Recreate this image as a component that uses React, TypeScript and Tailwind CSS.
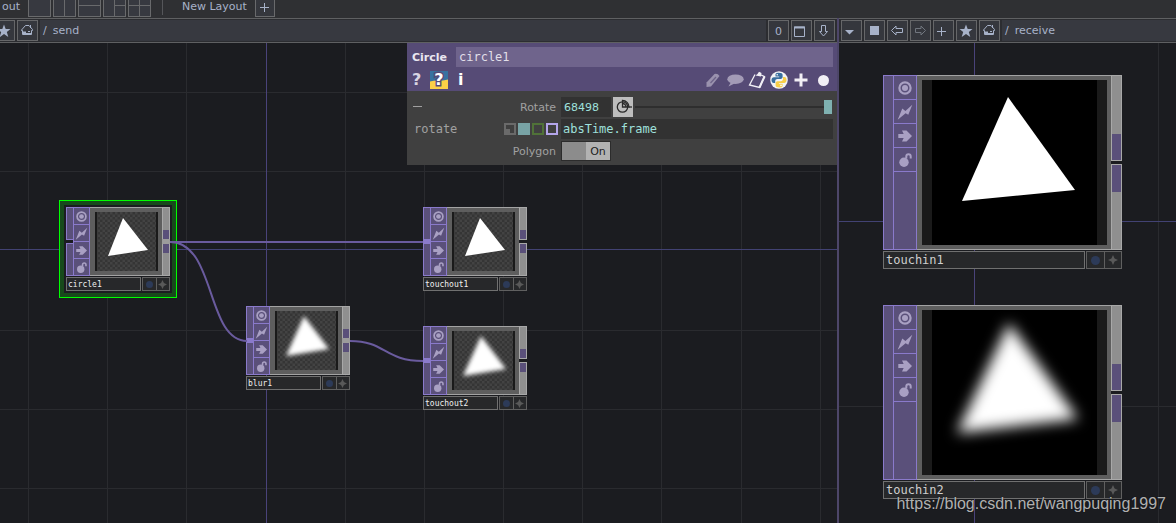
import type { ReactNode } from "react";

type Point = [number, number];

const Svg19 = ({ children, dim = false }: { children: ReactNode; dim?: boolean }) => (
  <svg viewBox="0 0 19 19" className={dim ? "size-[19px] text-[#71767f]" : "size-[19px]"} fill="none" stroke="currentColor" aria-hidden="true">
    {children}
  </svg>
);

const StarIcon = () => (
  <Svg19>
    <path d="M9 3.5l1.700 4.600h4.800l-3.700 3 1.500 5-4.300-3-4.300 3 1.500-5-3.700-3h4.800z" fill="currentColor" stroke="none" />
  </Svg19>
);

const HomeIcon = () => (
  <Svg19>
    <path d="M3.500 9L7.500 4.500H11L14.500 8.500V9.500H13.500V13.500H4.500V9.500H3.500z" />
    <path d="M5 10.500h3v3H5z" fill="currentColor" stroke="none" />
    <path d="M8 12.500h5M10 10.500h2" />
    <path d="M12.500 4v3" />
  </Svg19>
);

const WindowIcon = () => (
  <Svg19>
    <path d="M2.500 6v9.500h10V6z" />
    <path d="M2 6.500h11" strokeWidth="2" />
  </Svg19>
);

const DownIcon = () => (
  <Svg19>
    <path d="M6.500 4.500h4v6h2l-4 4.500-4-4.500h2z" />
  </Svg19>
);

const PlusIcon = () => (
  <Svg19>
    <path d="M3 10.500h9M7.500 6v9" />
  </Svg19>
);

function ToolButton({ label, children }: { label: string; children: ReactNode }) {
  return (
    <button
      type="button"
      aria-label={label}
      className="flex size-[21px] shrink-0 items-center justify-center border border-[#666769] bg-[#35373d] text-[#a7b2c9]"
    >
      {children}
    </button>
  );
}

function PathField({ label, value }: { label: string; value: string }) {
  return (
    <label className="flex h-[21px] min-w-0 flex-1 items-center gap-1.5 bg-[#373940] px-[3px] pt-0.5 text-[11px] text-[#a7b2c9]">
      <span>/</span>
      <input aria-label={label} defaultValue={value} className="min-w-0 flex-1 bg-transparent outline-none" />
    </label>
  );
}

function LayoutButton({ label, d }: { label: string; d: string }) {
  return (
    <button type="button" aria-label={label} className="size-[23px] border border-[#696a6c] bg-[#373940]">
      <svg viewBox="0 0 21 21" className="size-[21px]" stroke="#696a6c" fill="none" aria-hidden="true">
        <path d={d} />
      </svg>
    </button>
  );
}

function TopBar() {
  return (
    <header className="flex h-[18px] items-center overflow-hidden bg-[#2f3033] text-[11px] text-[#a7b2c9]">
      <span className="w-7 shrink-0 pb-[3px] pl-0.5">out</span>
      <div className="-mt-2 flex shrink-0 gap-0.5">
        <LayoutButton label="Single pane" d="" />
        <LayoutButton label="Two columns" d="M10.500 0v21" />
        <LayoutButton label="Two rows" d="M0 10.500h21" />
        <LayoutButton label="Split right" d="M10.500 0v21M10.500 10.500h10.500" />
        <LayoutButton label="Four panes" d="M10.500 0v21M0 10.500h21" />
      </div>
      <span className="-mt-2 ml-[11px] h-5 w-px bg-[#55565a]" />
      <span className="ml-[19px] shrink-0 pb-[3px]">New Layout</span>
      <button type="button" aria-label="Add layout" className="-mt-1 ml-2 flex h-[19px] w-5 shrink-0 items-center justify-center border border-[#696a6c] bg-[#35373d]">
        <svg viewBox="0 0 11 11" className="size-[11px]" stroke="currentColor" aria-hidden="true">
          <path d="M1 5.500h9M5.500 1v9" />
        </svg>
      </button>
    </header>
  );
}

const FlagIcons = [
  <g key="view">
    <circle cx="7" cy="7" r="5.600" fill="none" stroke="currentColor" strokeWidth="2.200" />
    <circle cx="7" cy="7" r="3" fill="currentColor" />
  </g>,
  <path key="cook" d="M14.300 -.3L10.300 9.800L7.600 8.200L-.3 14.800L4.300 3.600L7.400 5.900Z" fill="currentColor" />,
  <path key="bypass" d="M.3 5h5.400L4 1.500H8.500L14 7L8.500 12.500H4L5.700 9H.3z" fill="currentColor" />,
  <g key="lock">
    <circle cx="6" cy="9.200" r="4.700" fill="currentColor" />
    <path d="M8.300 5.500V3.500a2.200 2.200 0 0 1 4.400 0v2" fill="none" stroke="currentColor" strokeWidth="2" />
  </g>,
];
const flagLabels = ["Viewer active", "Cooking", "Bypass", "Lock"];

type NodeProps = {
  name: string;
  large?: boolean;
  blurred?: boolean;
  input: "open" | "joined" | "none";
  outputOpen?: boolean;
};

function Viewer({ name, large, blurred }: { name: string; large?: boolean; blurred?: boolean }) {
  const w = large ? 185 : 63;
  const h = large ? 165 : 59;
  const edge = large ? 10 : 2;
  const sharpL: Point[] = [[86, 17], [153, 110], [40, 121]];
  const softL: Point[] = [[87, 13], [156, 109], [35, 123]];
  const sharpS: Point[] = [[28, 6], [53, 38], [13, 44]];
  const softS: Point[] = [[29, 5], [54, 38], [11, 45]];
  const pts = large ? (blurred ? softL : sharpL) : blurred ? softS : sharpS;
  return (
    <svg viewBox={`0 0 ${w} ${h}`} className="block size-full" role="img" aria-label={`${name} output`}>
      <defs>
        <pattern id={`check-${name}`} width="5" height="5" patternUnits="userSpaceOnUse">
          <rect width="5" height="5" fill="#353535" />
          <path d="M0 0h2.500v2.500h-2.500zM2.500 2.500h2.500v2.500h-2.500z" fill="#434343" />
        </pattern>
        <filter id={`soft-${name}`} x="-30%" y="-30%" width="160%" height="160%" colorInterpolationFilters="sRGB">
          <feGaussianBlur stdDeviation={large ? 7 : 2.3} />
        </filter>
      </defs>
      <rect width={w} height={h} fill="#1a1a1a" />
      <rect x={edge} width={w - edge * 2} height={h} fill={large ? "#000000" : `url(#check-${name})`} />
      <polygon points={pts.map((p) => p.join(",")).join(" ")} fill="#ffffff" filter={blurred ? `url(#soft-${name})` : undefined} />
    </svg>
  );
}

function OpNode({ name, large, blurred, input, outputOpen }: NodeProps) {
  return (
    <div className={large ? "w-[239px]" : "w-[104px]"}>
      <div className={large ? "flex h-[175px]" : "flex h-[69px]"}>
        <div className={large ? "flex w-2.5 flex-col border-y border-l border-[#8a7acb] bg-[#5a507a]" : "flex w-[7px] flex-col"}>
          {!large && (
            <>
              <div className="flex-1 border-t border-l border-[#8a7acb] bg-[#5a507a]" />
              {input === "open" && <div className="h-[5px] border-y border-[#8a7acb] bg-[#1b1c20]" />}
              {input === "joined" && <div className="h-[5px] bg-[#8a7acb]" />}
              <div className="flex-1 border-b border-l border-[#8a7acb] bg-[#5a507a]" />
            </>
          )}
        </div>
        <div className={large ? "w-6 border border-[#8a7acb] bg-[#5a507a]" : "flex w-[17px] flex-col border border-[#8a7acb] bg-[#5a507a]"}>
          {FlagIcons.map((icon, i) => (
            <button
              key={flagLabels[i]}
              type="button"
              aria-label={flagLabels[i]}
              className={
                large
                  ? "flex h-6 w-full items-center justify-center border-b border-[#8a7acb] text-[#a9a0c3]"
                  : "flex w-full flex-1 items-center justify-center border-[#8a7acb] text-[#a9a0c3] not-last:border-b"
              }
            >
              <svg viewBox="0 0 14 14" className={large ? "size-3.5 overflow-visible" : "size-[11px] overflow-visible"} aria-hidden="true">
                {icon}
              </svg>
            </button>
          ))}
        </div>
        <div className="min-w-0 flex-1 border-y border-[#a3a3a3] bg-[#5e5e5e] py-1 pr-1 pl-[5px]">
          <Viewer name={name} large={large} blurred={blurred} />
        </div>
        <div className={large ? "flex w-[11px] flex-col" : "flex w-2 flex-col"}>
          <div className={large ? "flex h-[85px] flex-col justify-end border-t border-x border-[#a8a8a8] bg-[#8f8f8f]" : "flex flex-1 flex-col justify-end border-t border-x border-[#a8a8a8] bg-[#8f8f8f]"}>
            <div className={large ? "h-[26px] bg-[#5a507a]" : "h-[9px] bg-[#5a507a]"} />
          </div>
          <div className={outputOpen ? "h-[5px] border-y border-[#a8a8a8] bg-[#1b1c20]" : "h-[5px] bg-[#9c9c9c]"} />
          <div className="flex-1 border-x border-b border-[#a8a8a8] bg-[#8f8f8f]">
            <div className={large ? "h-[27px] bg-[#5a507a]" : "h-[9px] bg-[#5a507a]"} />
          </div>
        </div>
      </div>
      <div className={large ? "mt-px flex h-[18px] gap-px" : "mt-px flex h-3.5 gap-px"}>
        <span
          className={
            large
              ? "flex flex-1 items-center border border-[#707070] bg-[#27282a] pl-0.5 font-['DejaVu_Sans_Mono',monospace] text-[12px] leading-none text-[#cfcfcf]"
              : "flex flex-1 items-center border border-[#707070] bg-[#27282a] pt-px pl-px font-['DejaVu_Sans_Mono',monospace] text-[8px] leading-none text-[#f0f0f0]"
          }
        >
          {name}
        </span>
        <div className={large ? "flex w-9 border border-[#606060] bg-[#27282a]" : "flex w-7 border border-[#606060] bg-[#27282a]"}>
          <button type="button" aria-label="Display" className="flex flex-1 items-center justify-center border-r border-[#606060]">
            <span className={large ? "size-[9px] rounded-full bg-[#2c3a58]" : "size-[7px] rounded-full bg-[#2c3a58]"} />
          </button>
          <button type="button" aria-label="Viewer" className="flex flex-1 items-center justify-center">
            <svg viewBox="0 0 10 10" className={large ? "size-2.5" : "size-[9px]"} fill="#595959" aria-hidden="true">
              <path d="M5 0l1.600 3.400L10 5 6.600 6.600 5 10 3.400 6.600 0 5l3.400-1.600z" />
            </svg>
          </button>
        </div>
      </div>
    </div>
  );
}

const PythonMark = () => (
  <svg viewBox="0 0 18 18" className="size-[18px]" aria-hidden="true">
    <circle cx="9" cy="9" r="8.800" fill="#f4f4f6" />
    <path
      d="M8.800 1.800c-3 0-3.300 1-3.300 2v1.700h3.700v.7H4C2.400 6.200 1.500 7.300 1.500 9s.9 3 2.200 3h1.500v-1.800c0-1.300 1-2.200 2.200-2.200h3.300c1 0 1.900-.8 1.900-1.900V3.800c0-1.200-1.200-2-3.800-2z"
      fill="#3a6f9f"
    />
    <path
      d="M9.300 16.400c3 0 3.300-1 3.300-2v-1.700H8.900V12h5.200c1.600 0 2.400-1.200 2.400-2.900s-.8-3-2.100-3H13v1.900c0 1.300-1 2.200-2.200 2.200H7.500c-1 0-1.900.8-1.900 1.900v2.300c0 1.200 1.200 2 3.700 2z"
      fill="#f9cf48"
    />
    <circle cx="7.200" cy="3.700" r=".8" fill="#fff" />
    <circle cx="11" cy="14.400" r=".8" fill="#fff" />
  </svg>
);

function IconButton({ label, children }: { label: string; children: ReactNode }) {
  return (
    <button type="button" aria-label={label} className="flex h-[18px] w-[18px] items-center justify-center">
      {children}
    </button>
  );
}

function ParameterPanel() {
  return (
    <section className="absolute top-0 right-0 w-[430px] max-w-full bg-[#404040] text-[11px] text-[#a0a0a0]">
      <div className="bg-[#564b76] pt-1 pr-1 pb-0.5 pl-[5px] text-[#e9e6f0]">
        <div className="flex h-5 items-center">
          <label htmlFor="op-name" className="w-11 shrink-0 pt-0.5 font-bold">
            Circle
          </label>
          <input
            id="op-name"
            defaultValue="circle1"
            className="h-5 min-w-0 flex-1 bg-[#6f648c] px-[3px] font-['DejaVu_Sans_Mono',monospace] text-[12px] text-[#e2dfe9] outline-none"
          />
        </div>
        <div className="mt-1 flex h-[18px] items-center">
          <button type="button" className="w-[18px] text-left text-[16px] leading-none font-bold text-[#d8d4e2]">
            ?
          </button>
          <button
            type="button"
            className="relative flex size-[18px] items-center justify-center overflow-hidden bg-[#3872a0] text-[16px] leading-none font-bold text-white"
          >
            <svg viewBox="0 0 18 18" className="absolute inset-0 size-[18px]" aria-hidden="true">
              <path d="M0 10.500Q5 9 9 9.500T18 8.500V18H0z" fill="#fbd047" />
            </svg>
            <span className="relative [-webkit-text-stroke:3px_#564b76] [paint-order:stroke_fill]">?</span>
          </button>
          <button type="button" className="ml-2.5 w-3 text-left text-[16px] leading-none font-bold text-white">
            i
          </button>
          <div className="mr-px ml-auto flex items-center gap-1">
            <IconButton label="Edit">
              <svg viewBox="0 0 16 16" className="size-4" fill="#9a92ae" aria-hidden="true">
                <path d="M1.500 15V10.500L9.500 2Q12.500 1 14.500 4L6 14.500z" />
                <path d="M5.500 11L11 5" stroke="#6d6388" strokeWidth="1.200" />
              </svg>
            </IconButton>
            <IconButton label="Comment">
              <svg viewBox="0 0 18 14" className="h-3.5 w-[18px]" fill="#a39bb6" aria-hidden="true">
                <ellipse cx="9.500" cy="6.200" rx="8.200" ry="4.800" />
                <path d="M5 9L2.500 13.500L9.500 10z" />
              </svg>
            </IconButton>
            <IconButton label="Copy parameters">
              <svg viewBox="0 0 18 18" className="size-[18px]" fill="none" stroke="#f1eff5" strokeWidth="1.300" aria-hidden="true">
                <path d="M7 3.500L1.500 14L11.500 16.500L16.500 5.500L13 4" />
                <path d="M11.500 16.500L16.500 5.500" strokeWidth="2" />
                <path d="M7.500 4.500L9.500 3L11 .8L13.500 2L13 5.500z" fill="#f1eff5" stroke="none" />
              </svg>
            </IconButton>
            <IconButton label="Language">
              <PythonMark />
            </IconButton>
            <IconButton label="Add parameter">
              <svg viewBox="0 0 14 14" className="size-3.5" stroke="#f1eff5" strokeWidth="3" aria-hidden="true">
                <path d="M.5 7h13M7 .5v13" />
              </svg>
            </IconButton>
            <IconButton label="Show changed only">
              <span className="size-[11px] rounded-full bg-[#f1eff5]" />
            </IconButton>
          </div>
        </div>
      </div>
      <div className="grid gap-0.5 pt-1.5 pr-1 pb-1 pl-1.5">
        <div className="flex h-5 items-center">
          <button type="button" aria-label="Collapse" className="mb-0.5 h-px w-[9px] bg-[#a0a0a0]" />
          <label htmlFor="rotate" className="ml-auto pt-0.5 pr-[5px]">
            Rotate
          </label>
          <input
            id="rotate"
            defaultValue="68498"
            className="h-5 w-[50px] bg-[#323232] px-[3px] text-[11px] text-[#9fe0dc] outline-none"
          />
          <button type="button" aria-label="Rotate dial" className="ml-0.5 flex size-5 items-center justify-center bg-[#bdbdbd]">
            <svg viewBox="0 0 18 18" className="size-[18px]" fill="none" stroke="#2a2a2a" strokeWidth="1.300" aria-hidden="true">
              <circle cx="8.500" cy="9" r="5.200" />
              <path d="M8.500 9V2.500A6.500 6.500 0 0 1 15 9z" />
              <path d="M8.500 5.500A3.500 3.500 0 0 1 12 9" />
              <path d="M15 9h3" />
            </svg>
          </button>
          <input
            type="range"
            aria-label="Rotate slider"
            min="0"
            max="100"
            defaultValue="100"
            className="mr-px ml-0.5 h-3.5 w-[197px] appearance-none bg-[linear-gradient(#2e2e2e,#2e2e2e)] bg-[length:100%_2px] bg-center bg-no-repeat [&::-webkit-slider-thumb]:h-3.5 [&::-webkit-slider-thumb]:w-2 [&::-webkit-slider-thumb]:appearance-none [&::-webkit-slider-thumb]:bg-[#7fb1b1]"
          />
        </div>
        <div className="flex h-5 items-center">
          <label htmlFor="rotate-expr" className="pl-px font-['DejaVu_Sans_Mono',monospace] text-[12px]">
            rotate
          </label>
          <div className="mr-[3px] ml-auto flex gap-0.5">
            <button type="button" aria-label="Constant mode" className="flex size-3 flex-col items-start justify-end border-2 border-[#6a6a6a]">
              <span className="size-1 bg-[#6a6a6a]" />
            </button>
            <button type="button" aria-label="Expression mode" className="size-3 bg-[#78a3a5]" />
            <button type="button" aria-label="Export mode" className="size-3 border-2 border-[#507238]" />
            <button type="button" aria-label="Bind mode" className="size-3 border-2 border-[#b3a5ea]" />
          </div>
          <input
            id="rotate-expr"
            defaultValue="absTime.frame"
            className="h-5 w-[272px] bg-[#323232] px-0.5 font-['DejaVu_Sans_Mono',monospace] text-[12px] text-[#9fe0dc] outline-none"
          />
        </div>
        <div className="flex h-5 items-center justify-end">
          <span className="pt-0.5 pr-[5px]">Polygon</span>
          <div className="w-[272px]">
            <button
              type="button"
              role="switch"
              aria-checked="true"
              aria-label="Polygon"
              className="flex h-5 w-[50px] border border-[#2c2c2c] bg-[#8c8c8c] text-[#1e1e1e]"
            >
              <span className="ml-6 flex h-full flex-1 items-center justify-center bg-[#b2b2b2] pt-0.5">On</span>
            </button>
          </div>
        </div>
      </div>
    </section>
  );
}

const leftColumns = [28, 107, 186, 345, 424, 503, 582, 661, 741, 820];
const leftRows = [49, 128, 287, 366, 445];

function SendNetwork() {
  return (
    <div className="relative flex-1 overflow-hidden bg-[#1b1c20]">
      <svg className="absolute inset-0 size-full" shapeRendering="crispEdges" aria-hidden="true">
        {leftColumns.map((x) => (
          <rect key={x} x={x} width="1" height="100%" fill="#2a2b2f" />
        ))}
        {leftRows.map((y) => (
          <rect key={y} y={y} width="100%" height="1" fill="#2a2b2f" />
        ))}
        <rect x="266" width="1" height="100%" fill="#4a437a" />
        <rect y="206" width="100%" height="1" fill="#424273" />
      </svg>
      <div className="absolute top-[157px] left-[59px] border border-[#00ff00] bg-[#1b1c20]">
        <div className="border-4 border-[#174a1b] p-0.5">
          <OpNode name="circle1" input="open" />
        </div>
      </div>
      <div className="absolute top-[263px] left-[246px]">
        <OpNode name="blur1" input="joined" blurred />
      </div>
      <div className="absolute top-[164px] left-[423px]">
        <OpNode name="touchout1" input="joined" outputOpen />
      </div>
      <div className="absolute top-[283px] left-[423px]">
        <OpNode name="touchout2" input="joined" outputOpen blurred />
      </div>
      <svg className="pointer-events-none absolute inset-0 size-full" fill="none" stroke="#6a5b9e" strokeWidth="2" aria-hidden="true">
        <path d="M170 199H423" />
        <path d="M170 199C216 199 206 298 247 298" />
        <path d="M350 298C386 298 384 318 423 318" />
      </svg>
      <ParameterPanel />
    </div>
  );
}

function ReceiveNetwork() {
  return (
    <div className="relative flex-1 overflow-hidden bg-[#1b1c20]">
      <svg className="absolute inset-0 size-full" shapeRendering="crispEdges" aria-hidden="true">
        <rect x="319" width="1" height="100%" fill="#2a2b2f" />
        <rect y="363" width="100%" height="1" fill="#2a2b2f" />
        <rect x="135" width="1" height="100%" fill="#4a437a" />
        <rect y="178" width="100%" height="1" fill="#424273" />
      </svg>
      <div className="absolute top-8 left-11">
        <OpNode name="touchin1" large input="none" outputOpen />
      </div>
      <div className="absolute top-[262px] left-11">
        <OpNode name="touchin2" large input="none" outputOpen blurred />
      </div>
      <p className="absolute right-2.5 bottom-2 font-['Liberation_Sans',sans-serif] text-[16px] leading-[22px] text-white/70 [text-shadow:0_0_1px_#000]">
        https://blog.csdn.net/wangpuqing1997
      </p>
    </div>
  );
}

export default function App() {
  return (
    <div className="flex min-h-screen flex-col overflow-hidden bg-[#1b1c20] font-['DejaVu_Sans',sans-serif]">
      <TopBar />
      <main className="grid flex-1 grid-cols-[minmax(0,837fr)_2px_minmax(0,337fr)]">
        <section className="flex flex-col">
          <div className="flex h-[25px] items-center gap-0.5 overflow-hidden border-y border-[#5f6062] bg-[#2c2d31] pr-0.5">
            <div className="-ml-1.5 flex gap-0.5">
              <ToolButton label="Bookmarks"><StarIcon /></ToolButton>
              <ToolButton label="Home"><HomeIcon /></ToolButton>
            </div>
            <PathField label="Send network path" value="send" />
            <ToolButton label="Depth">
              <span className="pt-0.5 text-[11px] leading-none">0</span>
            </ToolButton>
            <ToolButton label="Maximize pane"><WindowIcon /></ToolButton>
            <ToolButton label="Split pane"><DownIcon /></ToolButton>
          </div>
          <SendNetwork />
        </section>
        <div className="bg-[#4d4669]" />
        <section className="flex flex-col">
          <div className="flex h-[25px] items-center gap-0.5 overflow-hidden border-y border-[#5f6062] bg-[#2c2d31] pl-0.5">
            <ToolButton label="Pane type">
              <Svg19>
                <path d="M3 9h9l-4.500 4.500z" fill="currentColor" stroke="none" />
              </Svg19>
            </ToolButton>
            <ToolButton label="Stop">
              <Svg19>
                <rect x="5" y="5" width="9" height="9" fill="currentColor" stroke="none" />
              </Svg19>
            </ToolButton>
            <ToolButton label="Back">
              <Svg19>
                <path d="M3.500 9.500l4.500-4.500v2.500h6.500v4h-6.500v2.500z" />
              </Svg19>
            </ToolButton>
            <ToolButton label="Forward">
              <Svg19 dim>
                <path d="M14.500 9.500l-4.500-4.500v2.500h-5.500v4h5.500v2.500z" />
              </Svg19>
            </ToolButton>
            <ToolButton label="Add bookmark"><PlusIcon /></ToolButton>
            <ToolButton label="Bookmarks"><StarIcon /></ToolButton>
            <ToolButton label="Home"><HomeIcon /></ToolButton>
            <PathField label="Receive network path" value="receive" />
          </div>
          <ReceiveNetwork />
        </section>
      </main>
    </div>
  );
}
